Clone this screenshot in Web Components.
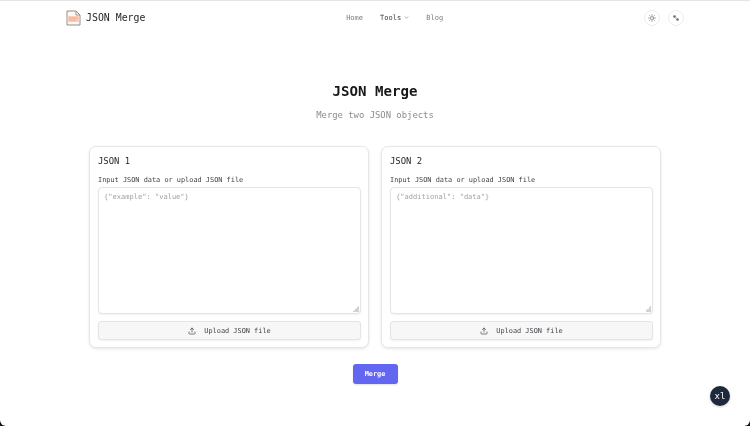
<!DOCTYPE html>
<html lang="en">
<head>
<meta charset="utf-8">
<title>JSON Merge</title>
<style>
  html, body { margin: 0; height: 426px; overflow: hidden; background: #111; }
  body { font-family: "DejaVu Sans Mono", "Liberation Mono", monospace; }
</style>
</head>
<body>
<app-page>
  <site-header></site-header>
  <page-title heading="JSON Merge" sub="Merge two JSON objects"></page-title>
  <merge-tool></merge-tool>
  <chat-badge>xl</chat-badge>
</app-page>

<script>
class AppPage extends HTMLElement {
  constructor() {
    super();
    this.attachShadow({ mode: "open" });
    this.shadowRoot.innerHTML = `
      <style>
        :host {
          display: block;
          position: relative;
          height: 425px;
          background: #fff;
          border-top: 1px solid #e5e5e5;
          border-radius: 0 0 6px 6px;
          overflow: hidden;
        }
      </style>
      <slot></slot>
    `;
  }
}

class SiteHeader extends HTMLElement {
  constructor() {
    super();
    this.attachShadow({ mode: "open" });
    this.shadowRoot.innerHTML = `
      <style>
        :host {
          display: flex;
          justify-content: space-between;
          align-items: center;
          height: 33px;
          padding: 0 66px;
          will-change: transform;
        }
        .brand { display: flex; align-items: center; gap: 5px; font-size: 9.9px; color: #27272a; }
        .brand svg { width: 15px; height: 16px; }
        nav { display: flex; align-items: center; gap: 17px; font-size: 7.05px; color: #7c7c85; }
        nav b { font-weight: 500; color: #3f3f46; display: flex; align-items: center; gap: 3px; }
        .actions { display: flex; gap: 8px; }
        .round {
          box-sizing: border-box;
          width: 16px; height: 16px; border-radius: 50%;
          border: 1px solid #ececee; display: flex; align-items: center; justify-content: center;
        }
        .round svg { width: 8px; height: 8px; }
      </style>
      <div class="brand">
        <svg viewBox="0 0 15 16" fill="none">
          <path d="M1 1h9l4 4v10H1z" fill="#fbf8f6" stroke="#8a827d" stroke-width=".9"/>
          <path d="M10 1v4h4" stroke="#8a827d" stroke-width=".8"/>
          <rect x="1.6" y="6" width="11.8" height="6" fill="#f8cfb8"/>
          <path d="M3 8h9M3 10h7" stroke="#ec9f7c" stroke-width=".8"/>
        </svg>
        <span>JSON Merge</span>
      </div>
      <nav>
        <span>Home</span>
        <b>Tools
          <svg width="5" height="5" viewBox="0 0 6 6" fill="none"><path d="M1 2l2 2 2-2" stroke="#8a8a92" stroke-width=".8"/></svg>
        </b>
        <span>Blog</span>
      </nav>
      <div class="actions">
        <span class="round">
          <svg viewBox="0 0 16 16" fill="none" stroke="#71717a" stroke-width="1.3" stroke-linecap="round">
            <circle cx="8" cy="8" r="3"/>
            <path d="M8 1v2M8 13v2M1 8h2M13 8h2M3 3l1.4 1.4M11.6 11.6L13 13M3 13l1.4-1.4M11.6 4.4L13 3"/>
          </svg>
        </span>
        <span class="round">
          <svg viewBox="0 0 16 16" fill="#6b6b74">
            <circle cx="5" cy="5" r="2.6"/>
            <circle cx="11" cy="11" r="2.6"/>
            <path d="M6 8.5L8.5 6l1.5 1.5L7.5 10z" fill="#b5b5ba"/>
          </svg>
        </span>
      </div>
    `;
  }
}

class PageTitle extends HTMLElement {
  constructor() {
    super();
    this.attachShadow({ mode: "open" });
    this.shadowRoot.innerHTML = `
      <style>
        :host { display: block; text-align: center; padding-top: 47px; will-change: transform; }
        h1 { margin: 0; font-size: 14.1px; line-height: 20px; font-weight: 700; color: #18181b; }
        p { margin: 6px 0 0; font-size: 8.9px; line-height: 16px; color: #8b8b93; }
      </style>
      <h1></h1>
      <p></p>
    `;
  }

  connectedCallback() {
    this.shadowRoot.querySelector("h1").textContent = this.getAttribute("heading");
    this.shadowRoot.querySelector("p").textContent = this.getAttribute("sub");
  }
}

class JsonCard extends HTMLElement {
  constructor() {
    super();
    this.attachShadow({ mode: "open" });
    this.shadowRoot.innerHTML = `
      <style>
        :host {
          display: flex;
          flex-direction: column;
          box-sizing: border-box;
          height: 202px;
          padding: 8px 7px 7px 8px;
          background: #fff;
          border: 1px solid #e6e6e8;
          border-radius: 7px;
          box-shadow: 0 1px 3px rgba(0, 0, 0, .1);
        }
        h2 { margin: 0; font-size: 8.9px; line-height: 13px; font-weight: 400; color: #27272a; }
        label { margin-top: 6px; font-size: 6.9px; line-height: 13px; color: #3f3f46; }
        textarea {
          flex: none;
          box-sizing: border-box;
          width: 100%;
          height: 127px;
          margin: 0;
          padding: 4px 5px;
          font: 7.05px/10px "DejaVu Sans Mono", "Liberation Mono", monospace;
          color: #27272a;
          background: #fff;
          border: 1px solid #e4e4e7;
          border-radius: 4px;
          box-shadow: 0 1px 2px rgba(0, 0, 0, .06);
          outline: none;
          display: block;
        }
        textarea::placeholder { color: #a1a1aa; opacity: 1; }
        textarea::-webkit-resizer {
          background: linear-gradient(135deg, transparent 50%, #d2d2d6 50%) no-repeat right 1px bottom 1px / 6px 6px;
        }
        button {
          flex: none;
          display: flex;
          align-items: center;
          justify-content: center;
          gap: 8px;
          height: 19px;
          margin-top: 7px;
          padding: 0;
          font: 6.9px "DejaVu Sans Mono", "Liberation Mono", monospace;
          color: #3f3f46;
          background: #f7f7f8;
          border: 1px solid #e4e4e7;
          border-radius: 3px;
          box-shadow: 0 1px 2px rgba(0, 0, 0, .06);
        }
        button svg { width: 8px; height: 8px; }
      </style>
      <h2></h2>
      <label>Input JSON data or upload JSON file</label>
      <textarea></textarea>
      <button>
        <svg viewBox="0 0 24 24" fill="none" stroke="#3f3f46" stroke-width="2" stroke-linecap="round" stroke-linejoin="round">
          <path d="M21 15v4a2 2 0 0 1-2 2H5a2 2 0 0 1-2-2v-4"/>
          <path d="M17 8l-5-5-5 5"/>
          <path d="M12 3v12"/>
        </svg>
        Upload JSON file
      </button>
    `;
  }

  connectedCallback() {
    this.shadowRoot.querySelector("h2").textContent = this.getAttribute("heading");
    this.shadowRoot.querySelector("textarea").placeholder = this.getAttribute("placeholder");
  }
}

class MergeTool extends HTMLElement {
  constructor() {
    super();
    this.attachShadow({ mode: "open" });
    this.shadowRoot.innerHTML = `
      <style>
        :host { display: block; padding: 23px 89px 0; will-change: transform; }
        .cards { display: grid; grid-template-columns: 280px 280px; column-gap: 12px; }
        .foot { display: flex; justify-content: center; margin-top: 16px; }
        button {
          width: 45px; height: 20px; padding: 0;
          font: 700 6.9px "DejaVu Sans Mono", "Liberation Mono", monospace;
          color: #fff;
          background: #6366f1;
          border: 0;
          border-radius: 3px;
          box-shadow: 0 1px 2px rgba(0, 0, 0, .12);
        }
      </style>
      <div class="cards">
        <json-card heading="JSON 1" placeholder='{"example": "value"}'></json-card>
        <json-card heading="JSON 2" placeholder='{"additional": "data"}'></json-card>
      </div>
      <div class="foot"><button>Merge</button></div>
    `;
  }
}

class ChatBadge extends HTMLElement {
  constructor() {
    super();
    this.attachShadow({ mode: "open" });
    this.shadowRoot.innerHTML = `
      <style>
        :host {
          position: absolute;
          left: 710px;
          top: 385px;
          width: 20px;
          height: 20px;
          display: flex;
          align-items: center;
          justify-content: center;
          border-radius: 50%;
          background: #1e293b;
          color: #fff;
          font-size: 9px;
          box-shadow: 0 1px 3px rgba(0, 0, 0, .2);
        }
      </style>
      <slot></slot>
    `;
  }
}

customElements.define("app-page", AppPage);
customElements.define("site-header", SiteHeader);
customElements.define("page-title", PageTitle);
customElements.define("json-card", JsonCard);
customElements.define("merge-tool", MergeTool);
customElements.define("chat-badge", ChatBadge);
</script>
</body>
</html>
